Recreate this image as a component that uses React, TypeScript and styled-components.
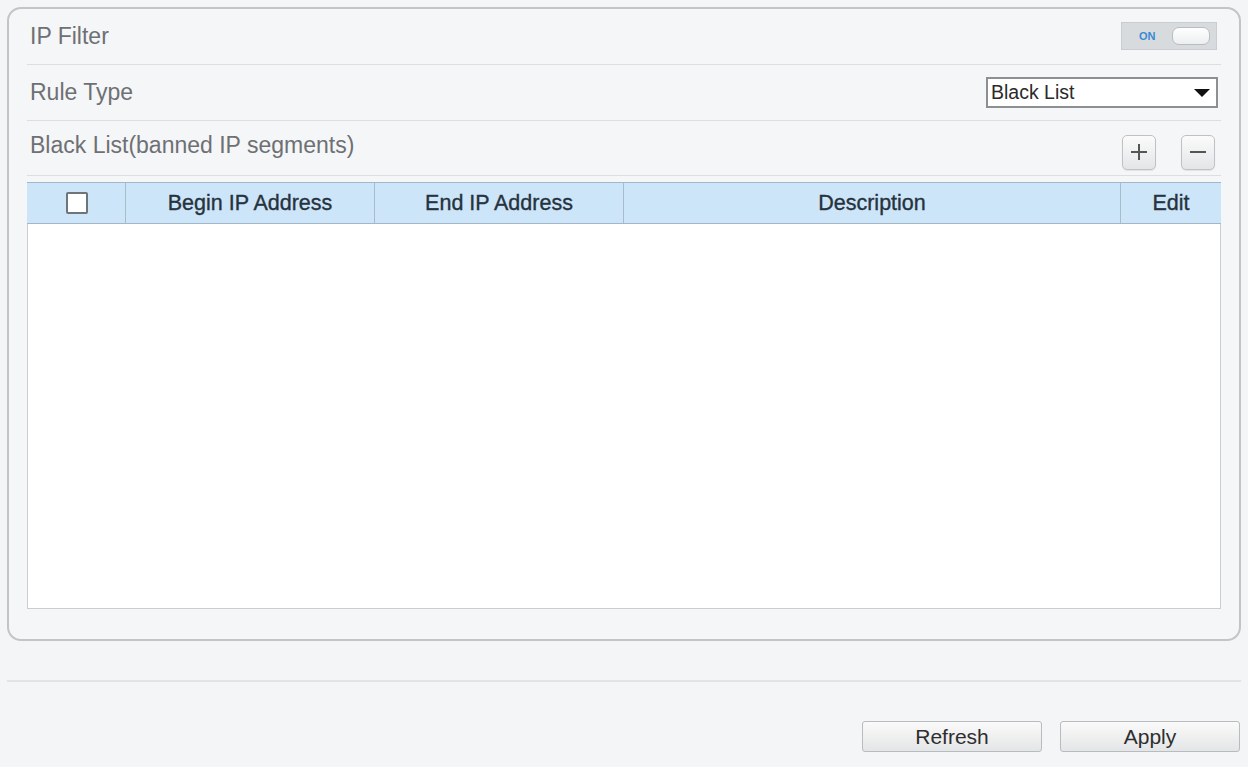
import React from 'react';
import styled, { createGlobalStyle } from 'styled-components';

const GlobalStyle = createGlobalStyle`
  html, body { margin: 0; padding: 0; background: #f3f5f7; }
  body { font-family: "Liberation Sans", Arial, sans-serif; }
  * { box-sizing: border-box; }
`;

const Page = styled.div`
  width: 1248px;
  height: 767px;
  padding: 7px 7px 0 7px;
  display: flex;
  flex-direction: column;
  background: #f3f5f7;
`;

const Panel = styled.section`
  height: 634px;
  border: 2px solid #c2c5c8;
  border-radius: 14px;
  padding: 0 18px 30px 18px;
  display: flex;
  flex-direction: column;
  background: #f4f6f8;
`;

const Row = styled.div<{ $h: number }>`
  height: ${(p) => p.$h}px;
  border-bottom: 1px solid #dcdfe2;
  display: flex;
  align-items: center;
  justify-content: space-between;
`;

const Label = styled.span<{ $shift?: number }>`
  font-size: 23px;
  color: #6e7073;
  padding-left: 3px;
  margin-top: ${(p) => p.$shift ?? 0}px;
`;

const Toggle = styled.div`
  width: 96px;
  height: 28px;
  margin-right: 4px;
  margin-top: -2px;
  background: #d8dbde;
  border: 1px solid #c9ccd0;
  display: flex;
  align-items: center;
  justify-content: space-between;
  padding: 0 6px 0 17px;
`;

const ToggleText = styled.span`
  font-size: 11px;
  font-weight: bold;
  color: #3a8ad2;
`;

const Knob = styled.div`
  width: 38px;
  height: 18px;
  border-radius: 7px;
  background: linear-gradient(#ffffff, #eceef0);
  border: 1px solid #b9bdc1;
`;

const Select = styled.div`
  width: 232px;
  height: 31px;
  margin-right: 3px;
  border: 2px solid #8d9093;
  background: #ffffff;
  display: flex;
  align-items: center;
  justify-content: space-between;
  padding: 0 6px 0 3px;
  font-size: 19.5px;
  color: #2a2a2a;
`;

const Arrow = styled.span`
  width: 0;
  height: 0;
  border-left: 8.5px solid transparent;
  border-right: 8.5px solid transparent;
  border-top: 8px solid #111;
`;

const IconGroup = styled.div`
  display: flex;
  gap: 25px;
  margin-right: 6px;
  margin-top: 8px;
`;

const IconButton = styled.button`
  width: 34px;
  height: 35px;
  padding: 0;
  border: 1px solid #bfc2c5;
  border-radius: 5px;
  background: linear-gradient(#fbfbfb, #e3e5e7);
  display: flex;
  align-items: center;
  justify-content: center;
  box-shadow: 0 1px 1px rgba(0, 0, 0, 0.08);
`;

const Table = styled.div`
  margin-top: 6px;
  flex: 1;
  display: flex;
  flex-direction: column;
  border: 1px solid #c9ccd0;
  background: #ffffff;
`;

const HeaderRow = styled.div`
  height: 42px;
  display: grid;
  grid-template-columns: 99px 249px 249px 1fr 100px;
  background: #cde5f8;
  border-top: 1px solid #a3b7c8;
  border-bottom: 1px solid #a3b7c8;
  margin: -1px -1px 0 -1px;
`;

const HeaderCell = styled.div<{ $last?: boolean }>`
  display: flex;
  align-items: center;
  justify-content: center;
  font-size: 21.5px;
  color: #26323d;
  -webkit-text-stroke: 0.35px #26323d;
  border-right: ${(p) => (p.$last ? 'none' : '1px solid #a9bccc')};
`;

const Checkbox = styled.span`
  width: 22px;
  height: 22px;
  border: 2px solid #6f7478;
  border-radius: 2px;
  background: #ffffff;
  margin-left: 1px;
`;

const Body = styled.div`
  flex: 1;
`;

const Divider = styled.div`
  margin-top: 39px;
  height: 2px;
  background: #e1e4e7;
`;

const ActionBar = styled.div`
  margin-top: 39px;
  display: flex;
  justify-content: flex-end;
  gap: 18px;
  padding-right: 1px;
`;

const ActionButton = styled.button`
  width: 180px;
  height: 31px;
  border: 1px solid #b9bcbf;
  border-radius: 3px;
  background: linear-gradient(#fafafa, #e4e5e6);
  font-family: "Liberation Sans", Arial, sans-serif;
  font-size: 21px;
  color: #2e2e2e;
  padding: 0;
  display: flex;
  align-items: center;
  justify-content: center;
`;

export default function App() {
  return (
    <>
      <GlobalStyle />
      <Page>
        <Panel>
          <Row $h={56}>
            <Label>IP Filter</Label>
            <Toggle>
              <ToggleText>ON</ToggleText>
              <Knob />
            </Toggle>
          </Row>
          <Row $h={56}>
            <Label>Rule Type</Label>
            <Select>
              <span>Black List</span>
              <Arrow />
            </Select>
          </Row>
          <Row $h={55}>
            <Label $shift={-6}>Black List(banned IP segments)</Label>
            <IconGroup>
              <IconButton aria-label="add">
                <svg width="20" height="20" viewBox="0 0 20 20">
                  <path d="M10 2v16M2 10h16" stroke="#555" strokeWidth="2" fill="none" />
                </svg>
              </IconButton>
              <IconButton aria-label="remove">
                <svg width="20" height="20" viewBox="0 0 20 20">
                  <path d="M2 10h16" stroke="#555" strokeWidth="2" fill="none" />
                </svg>
              </IconButton>
            </IconGroup>
          </Row>
          <Table>
            <HeaderRow>
              <HeaderCell>
                <Checkbox />
              </HeaderCell>
              <HeaderCell>Begin IP Address</HeaderCell>
              <HeaderCell>End IP Address</HeaderCell>
              <HeaderCell>Description</HeaderCell>
              <HeaderCell $last>Edit</HeaderCell>
            </HeaderRow>
            <Body />
          </Table>
        </Panel>
        <Divider />
        <ActionBar>
          <ActionButton>Refresh</ActionButton>
          <ActionButton>Apply</ActionButton>
        </ActionBar>
      </Page>
    </>
  );
}
